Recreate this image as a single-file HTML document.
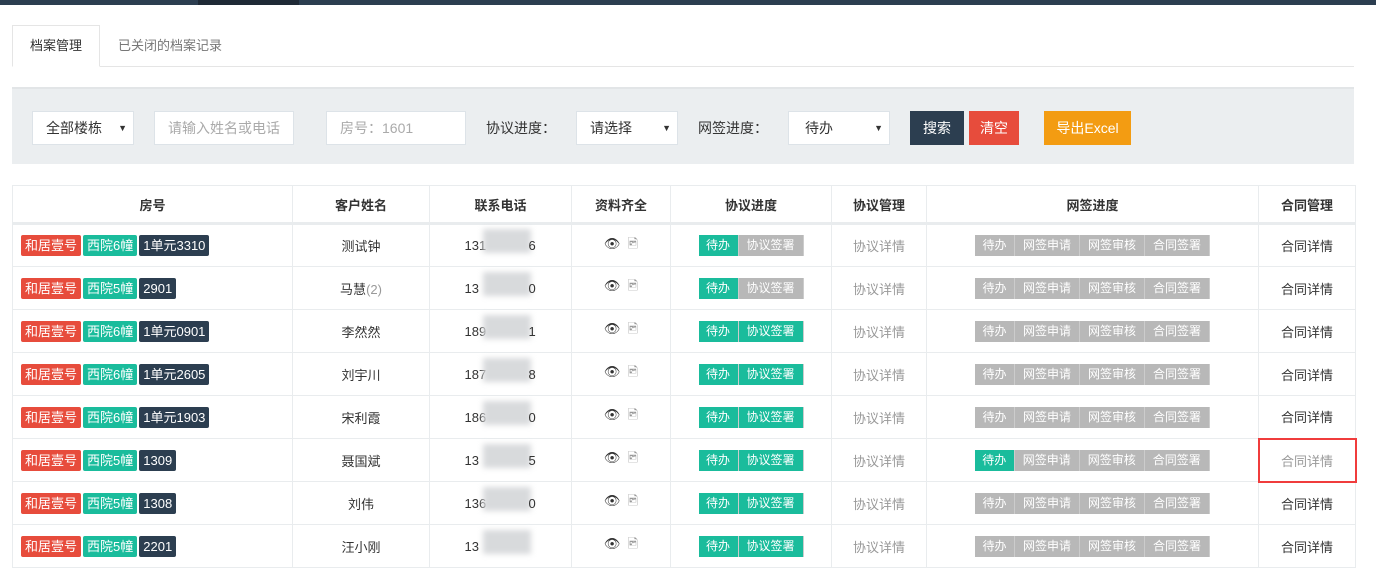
<!DOCTYPE html>
<html><head><meta charset="utf-8"><style>
*{box-sizing:border-box;margin:0;padding:0}
body{width:1376px;height:567px;overflow:hidden;background:#fff;font-family:"Liberation Sans","Noto Sans CJK SC",sans-serif;font-size:13px;color:#333;position:relative}
.top{position:absolute;left:0;top:0;width:1376px;height:5px;background:#2c3e50}
.top i{position:absolute;left:198px;width:101px;height:5px;background:#1f2a36}
.tabs{position:absolute;left:12px;top:25px;width:1342px;height:42px;border-bottom:1px solid #e5e5e5}
.tab1{position:absolute;left:0;top:0;width:88px;height:42px;border:1px solid #e5e5e5;border-bottom:1px solid #fff;background:#fff;text-align:center;line-height:40px;color:#333}
.tab2{position:absolute;left:106px;top:0;line-height:42px;color:#777}
.panel{position:absolute;left:12px;top:87px;width:1342px;height:77px;background:#ebeef0;border-top:2px solid #e2e5e7}
.in{position:absolute;top:22px;height:34px;background:#fff;border:1px solid #dde3e8;line-height:32px;padding-left:13px;color:#aaa;font-size:14px}
.sel{color:#333}
.sel::after{content:"▼";position:absolute;right:6px;top:0;font-size:9px;color:#333}
.lab{position:absolute;top:22px;line-height:34px;font-size:14px;color:#333}
.btn{position:absolute;top:22px;height:34px;line-height:34px;color:#fff;text-align:center;font-size:14px}
table{position:absolute;left:12px;top:185px;width:1343px;border-collapse:collapse;table-layout:fixed}
td,th{border:1px solid #e9ecee;text-align:center;vertical-align:middle;height:43px;font-size:13px;padding:0}
th{height:38px;font-weight:bold;color:#333;border-bottom:3px solid #e9ecee}
td.f{text-align:left;padding-left:8px;font-size:0}
.l{display:inline-block;height:21px;line-height:21px;color:#fff;padding:0 4px;margin-right:2px;font-size:13px;border-radius:2px}
.r{background:#e74c3c}.g{background:#1abc9c}.d{background:#2c3e50}
.bs{display:inline-flex;vertical-align:middle}
.b{display:block;height:21px;line-height:21px;color:#fff;font-size:12px;background:#b8b8b8;border-right:1px solid #ccc;text-align:center}
.t{background:#1abc9c}
.gy{color:#999}
.ph{position:relative;display:inline-block;width:72px;text-align:left}
.bl{position:absolute;left:18px;top:-9px;width:48px;height:24px;background:#d8dadc;filter:blur(3px)}
</style></head><body>
<div class="top"><i></i></div>
<div class="tabs"><div class="tab1">档案管理</div><div class="tab2">已关闭的档案记录</div></div>
<div class="panel">
<div class="in sel" style="left:20px;width:102px">全部楼栋</div>
<div class="in" style="left:142px;width:140px">请输入姓名或电话</div>
<div class="in" style="left:314px;width:140px">房号：1601</div>
<div class="lab" style="left:474px">协议进度：</div>
<div class="in sel" style="left:564px;width:102px">请选择</div>
<div class="lab" style="left:686px">网签进度：</div>
<div class="in sel" style="left:776px;width:102px;padding-left:16px">待办</div>
<div class="btn" style="left:898px;width:54px;background:#2c3e50">搜索</div>
<div class="btn" style="left:957px;width:50px;background:#e74c3c">清空</div>
<div class="btn" style="left:1032px;width:87px;background:#f39c12">导出Excel</div>
</div>
<table>
<colgroup><col style="width:280px"><col style="width:137px"><col style="width:142px"><col style="width:99px"><col style="width:161px"><col style="width:95px"><col style="width:332px"><col style="width:97px"></colgroup>
<tr><th>房号</th><th>客户姓名</th><th>联系电话</th><th>资料齐全</th><th>协议进度</th><th>协议管理</th><th>网签进度</th><th>合同管理</th></tr>
<tr><td class="f"><span class="l r">和居壹号</span><span class="l g">西院6幢</span><span class="l d">1单元3310</span></td><td>测试钟</td><td><span class="ph">131<i class="bl"></i><span style="position:absolute;left:64px">6</span></span></td><td>👁&nbsp;&nbsp;<span class="gy">🖻</span></td><td><span class="bs"><span class="b t" style="width:40px">待办</span><span class="b" style="width:65px">协议签署</span></span></td><td class="gy">协议详情</td><td><span class="bs"><span class="b" style="width:40px">待办</span><span class="b" style="width:65px">网签申请</span><span class="b" style="width:65px">网签审核</span><span class="b" style="width:65px">合同签署</span></span></td><td>合同详情</td></tr>
<tr><td class="f"><span class="l r">和居壹号</span><span class="l g">西院5幢</span><span class="l d">2901</span></td><td>马慧<span class="gy">(2)</span></td><td><span class="ph">13<i class="bl"></i><span style="position:absolute;left:64px">0</span></span></td><td>👁&nbsp;&nbsp;<span class="gy">🖻</span></td><td><span class="bs"><span class="b t" style="width:40px">待办</span><span class="b" style="width:65px">协议签署</span></span></td><td class="gy">协议详情</td><td><span class="bs"><span class="b" style="width:40px">待办</span><span class="b" style="width:65px">网签申请</span><span class="b" style="width:65px">网签审核</span><span class="b" style="width:65px">合同签署</span></span></td><td>合同详情</td></tr>
<tr><td class="f"><span class="l r">和居壹号</span><span class="l g">西院6幢</span><span class="l d">1单元0901</span></td><td>李然然</td><td><span class="ph">189<i class="bl"></i><span style="position:absolute;left:64px">1</span></span></td><td>👁&nbsp;&nbsp;<span class="gy">🖻</span></td><td><span class="bs"><span class="b t" style="width:40px">待办</span><span class="b t" style="width:65px">协议签署</span></span></td><td class="gy">协议详情</td><td><span class="bs"><span class="b" style="width:40px">待办</span><span class="b" style="width:65px">网签申请</span><span class="b" style="width:65px">网签审核</span><span class="b" style="width:65px">合同签署</span></span></td><td>合同详情</td></tr>
<tr><td class="f"><span class="l r">和居壹号</span><span class="l g">西院6幢</span><span class="l d">1单元2605</span></td><td>刘宇川</td><td><span class="ph">187<i class="bl"></i><span style="position:absolute;left:64px">8</span></span></td><td>👁&nbsp;&nbsp;<span class="gy">🖻</span></td><td><span class="bs"><span class="b t" style="width:40px">待办</span><span class="b t" style="width:65px">协议签署</span></span></td><td class="gy">协议详情</td><td><span class="bs"><span class="b" style="width:40px">待办</span><span class="b" style="width:65px">网签申请</span><span class="b" style="width:65px">网签审核</span><span class="b" style="width:65px">合同签署</span></span></td><td>合同详情</td></tr>
<tr><td class="f"><span class="l r">和居壹号</span><span class="l g">西院6幢</span><span class="l d">1单元1903</span></td><td>宋利霞</td><td><span class="ph">186<i class="bl"></i><span style="position:absolute;left:64px">0</span></span></td><td>👁&nbsp;&nbsp;<span class="gy">🖻</span></td><td><span class="bs"><span class="b t" style="width:40px">待办</span><span class="b t" style="width:65px">协议签署</span></span></td><td class="gy">协议详情</td><td><span class="bs"><span class="b" style="width:40px">待办</span><span class="b" style="width:65px">网签申请</span><span class="b" style="width:65px">网签审核</span><span class="b" style="width:65px">合同签署</span></span></td><td>合同详情</td></tr>
<tr><td class="f"><span class="l r">和居壹号</span><span class="l g">西院5幢</span><span class="l d">1309</span></td><td>聂国斌</td><td><span class="ph">13<i class="bl"></i><span style="position:absolute;left:64px">5</span></span></td><td>👁&nbsp;&nbsp;<span class="gy">🖻</span></td><td><span class="bs"><span class="b t" style="width:40px">待办</span><span class="b t" style="width:65px">协议签署</span></span></td><td class="gy">协议详情</td><td><span class="bs"><span class="b t" style="width:40px">待办</span><span class="b" style="width:65px">网签申请</span><span class="b" style="width:65px">网签审核</span><span class="b" style="width:65px">合同签署</span></span></td><td class="gy" style="border:2px solid #f03c3c">合同详情</td></tr>
<tr><td class="f"><span class="l r">和居壹号</span><span class="l g">西院5幢</span><span class="l d">1308</span></td><td>刘伟</td><td><span class="ph">136<i class="bl"></i><span style="position:absolute;left:64px">0</span></span></td><td>👁&nbsp;&nbsp;<span class="gy">🖻</span></td><td><span class="bs"><span class="b t" style="width:40px">待办</span><span class="b t" style="width:65px">协议签署</span></span></td><td class="gy">协议详情</td><td><span class="bs"><span class="b" style="width:40px">待办</span><span class="b" style="width:65px">网签申请</span><span class="b" style="width:65px">网签审核</span><span class="b" style="width:65px">合同签署</span></span></td><td>合同详情</td></tr>
<tr><td class="f"><span class="l r">和居壹号</span><span class="l g">西院5幢</span><span class="l d">2201</span></td><td>汪小刚</td><td><span class="ph">13<i class="bl"></i></span></td><td>👁&nbsp;&nbsp;<span class="gy">🖻</span></td><td><span class="bs"><span class="b t" style="width:40px">待办</span><span class="b t" style="width:65px">协议签署</span></span></td><td class="gy">协议详情</td><td><span class="bs"><span class="b" style="width:40px">待办</span><span class="b" style="width:65px">网签申请</span><span class="b" style="width:65px">网签审核</span><span class="b" style="width:65px">合同签署</span></span></td><td>合同详情</td></tr>
</table>
</body></html>
